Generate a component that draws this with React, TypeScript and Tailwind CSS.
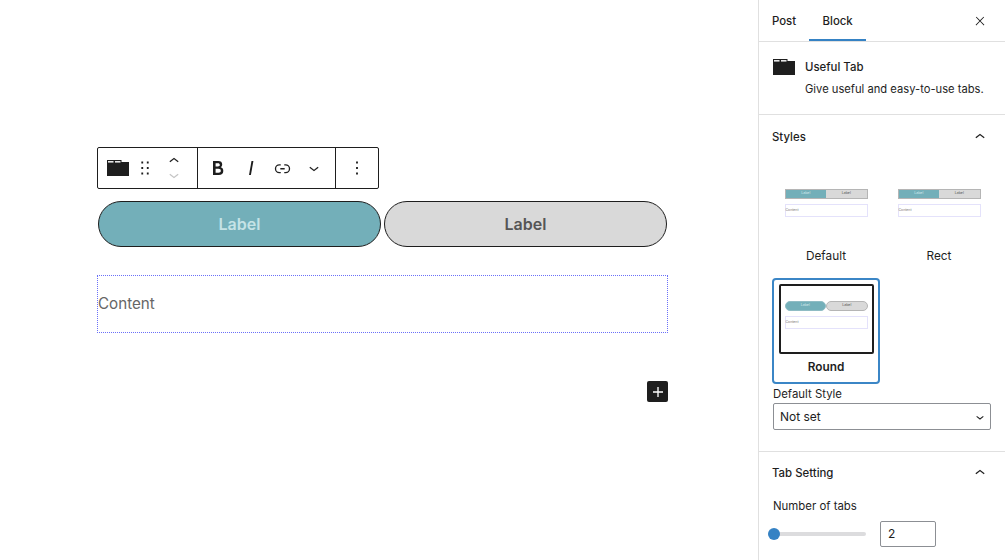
import type { ReactNode } from 'react'

const font = { bold: 'M14.7 11.3c1-.6 1.5-1.6 1.5-3 0-2.3-1.3-3.4-4-3.4H7v14h5.8c1.4 0 2.5-.3 3.3-1 .8-.7 1.2-1.7 1.2-2.9.1-1.9-.8-3.1-2.6-3.7zm-5.1-4h2.3c.6 0 1.1.1 1.4.4.3.3.5.7.5 1.2s-.2 1-.5 1.2c-.3.3-.8.4-1.4.4H9.6V7.3zm4.6 9c-.4.3-1 .4-1.7.4H9.6v-3.9h2.9c.7 0 1.3.2 1.7.5.4.3.6.8.6 1.5s-.2 1.2-.6 1.5z', italic: 'M12.5 5L10 19h1.9l2.5-14z' }
const link = 'M10 17.389H8.444A5.194 5.194 0 1 1 8.444 7H10v1.5H8.444a3.694 3.694 0 0 0 0 7.389H10v1.5ZM14 7h1.556a5.194 5.194 0 0 1 0 10.39H14v-1.5h1.556a3.694 3.694 0 0 0 0-7.39H14V7Zm-4.5 6h5v-1.5h-5V13Z'
const chevronDown = 'M17.5 11.6L12 16l-5.5-4.4.9-1.2L12 14l4.5-3.6 1 1.2z'
const chevronUp = 'M6.5 12.4L12 8l5.5 4.4-.9 1.2L12 10l-4.5 3.6-1-1.2z'
const more = 'M13 19h-2v-2h2v2zm0-6h-2v-2h2v2zm0-6h-2V5h2v2z'
const drag = 'M8 7h2V5H8v2zm0 6h2v-2H8v2zm0 6h2v-2H8v2zm6-14v2h2V5h-2zm0 8h2v-2h-2v2zm0 6h2v-2h-2v2z'
const close = 'M13 11.8l6.1-6.3-1-1-6.1 6.2-6.1-6.2-1 1 6.1 6.3-6.5 6.7 1 1 6.5-6.6 6.5 6.6 1-1z'
const plus = 'M18 11.2h-5.2V6h-1.6v5.2H6v1.6h5.2V18h1.6v-5.2H18z'

function Icon({ d, size = 24, className = '' }: { d: string; size?: number; className?: string }) {
  return <svg width={size} height={size} viewBox="0 0 24 24" fill="currentColor" className={className}><path d={d} /></svg>
}

function TabIcon() {
  return (
    <svg width="22" height="16" viewBox="0 0 22 16" className="shrink-0">
      <path d="M0 0h14.5v2H22v14H0z" fill="#1e1e1e" />
      <rect x="1" y="1" width="5.5" height="1.6" fill="#e8e8e8" />
      <rect x="8" y="1" width="5.5" height="1.6" fill="#e8e8e8" />
    </svg>
  )
}

function Preview({ round }: { round?: boolean }) {
  return (
    <div className="w-[83px]">
      <div className={`flex h-[10px] ${round ? '' : 'border border-[#b5b5b5]'}`}>
        <div className={`flex-1 flex items-center justify-center bg-[#73afb9] text-[3.5px] text-[#d5eaed] ${round ? 'rounded-full border border-[#8fbcc4]' : ''}`}>Label</div>
        <div className={`flex-1 flex items-center justify-center bg-[#d9d9d9] text-[3.5px] text-[#555] ${round ? 'rounded-full border border-[#b5b5b5]' : ''}`}>Label</div>
      </div>
      <div className="mt-[5px] h-[13px] border border-[#e4e2fb] flex items-center text-[3.5px] text-[#777]">Content</div>
    </div>
  )
}

function StyleCard({ label, round }: { label: string; round?: boolean }) {
  return (
    <div className={`h-[106px] w-[108px] flex flex-col items-center ${round ? 'rounded-[4px] border-2 border-[#3b86c6] p-[4px]' : 'p-[6px]'}`}>
      <div className={`h-[70px] w-[95px] shrink-0 flex justify-center ${round ? 'border-2 border-[#1e1e1e] rounded-[2px] pt-[15px]' : 'pt-[17px]'}`}>
        <Preview round={round} />
      </div>
      <div className={`leading-[18px] text-[11.8px] text-[#1e1e1e] ${round ? 'mt-[4px] font-semibold' : 'mt-[5px]'}`}>{label}</div>
    </div>
  )
}

function SectionTitle({ children }: { children: ReactNode }) {
  return (
    <div className="flex h-[22px] items-center justify-between">
      <span className="text-[11.4px] leading-[18px] font-medium text-[#1e1e1e]">{children}</span>
      <Icon d={chevronUp} size={20} className="text-[#1e1e1e] mr-[1px]" />
    </div>
  )
}

function ToolButton({ d, size = 24, className = '' }: { d: string; size?: number; className?: string }) {
  return <span className={`flex h-[24px] w-[24px] items-center justify-center ${className}`}><Icon d={d} size={size} className="text-[#1e1e1e]" /></span>
}

export default function App() {
  return (
    <div className="flex h-screen w-full overflow-hidden bg-white font-['Inter',sans-serif] text-[#1e1e1e]">
      <main className="flex-1 pt-[147px] pl-[97px]">
        <div className="w-[571px] flex flex-col">
          <div className="flex h-[42px] w-[282px] border border-[#1e1e1e] rounded-[2px]">
            <div className="flex items-center w-[100px] border-r border-[#1e1e1e] pl-[9px]">
              <TabIcon />
              <Icon d={drag} size={22} className="ml-[5px] text-[#1e1e1e]" />
              <div className="ml-[8px] flex flex-col items-center">
                <Icon d={chevronUp} size={20} className="-mb-[3px] text-[#1e1e1e]" />
                <Icon d={chevronDown} size={20} className="-mt-[3px] text-[#c4c4c4]" />
              </div>
            </div>
            <div className="flex items-center w-[138px] border-r border-[#1e1e1e] pl-[8px]">
              <ToolButton d={font.bold} />
              <ToolButton d={font.italic} className="ml-[9px]" />
              <ToolButton d={link} size={21} className="ml-[7px]" />
              <ToolButton d={chevronDown} size={20} className="ml-[8px]" />
            </div>
            <div className="flex flex-1 items-center justify-center"><Icon d={more} size={22} /></div>
          </div>
          <div className="mt-[12px] ml-[1px] flex gap-[3px] w-[569px]">
            <div className="flex h-[46px] w-[283px] items-center justify-center rounded-full border border-[#1e1e1e] bg-[#73afb9] text-[16px] font-semibold text-[#c5e3e6]">Label</div>
            <div className="flex h-[46px] w-[283px] items-center justify-center rounded-full border border-[#1e1e1e] bg-[#d9d9d9] text-[16px] font-semibold text-[#555]">Label</div>
          </div>
          <div className="mt-[28px] flex h-[58px] items-center border border-dotted border-[#6a70f8] text-[15.2px] text-[#666]">Content</div>
          <button className="mt-[48px] self-end flex h-[21px] w-[21px] items-center justify-center rounded-[2px] bg-[#1e1e1e] text-white"><Icon d={plus} size={20} /></button>
        </div>
      </main>
      <aside className="w-[247px] shrink-0 border-l border-[#e0e0e0] text-[11.4px]">
        <div className="flex h-[42px] items-start border-b border-[#e0e0e0] pl-[13px] pr-[14px]">
          <span className="mt-[12px] font-medium leading-[18px]">Post</span>
          <div className="ml-[13px] h-[41px] w-[57px] border-b-[2.5px] border-[#3582c4] text-center pt-[12px] font-medium leading-[18px]">Block</div>
          <Icon d={close} size={14} className="ml-auto mt-[14px] mr-[4px]" />
        </div>
        <div className="flex h-[73px] border-b border-[#e0e0e0] pl-[14px] pt-[16px]">
          <div className="pt-[1px]"><TabIcon /></div>
          <div className="ml-[10px]">
            <div className="font-medium leading-[18px]">Useful Tab</div>
            <div className="mt-[4px] text-[11.2px] leading-[18px]">Give useful and easy-to-use tabs.</div>
          </div>
        </div>
        <div className="h-[337px] border-b border-[#e0e0e0] pl-[13px] pr-[14px] pt-[11px]">
          <SectionTitle>Styles</SectionTitle>
          <div className="mt-[18px] grid grid-cols-[108px_108px] gap-x-[5px] gap-y-[6px]">
            <StyleCard label="Default" />
            <StyleCard label="Rect" />
            <StyleCard label="Round" round />
          </div>
          <div className="pl-[1px]">
            <div className="mt-[1px] leading-[18px]">Default Style</div>
            <div className="flex h-[27px] w-[218px] items-center justify-between rounded-[2px] border border-[#8c8f94] pl-[6px] pr-[2px] text-[12px]">
              <span>Not set</span>
              <Icon d={chevronDown} size={16} />
            </div>
          </div>
        </div>
        <div className="pl-[13px] pr-[14px] pt-[10px]">
          <SectionTitle>Tab Setting</SectionTitle>
          <div className="mt-[13px] pl-[1px] leading-[18px]">Number of tabs</div>
          <div className="mt-[6px] flex items-center">
            <div className="relative h-[4px] w-[98px] -ml-[4px] rounded-full bg-[#dcdcde]">
              <div className="absolute left-0 top-[-4px] h-[12px] w-[12px] rounded-full bg-[#3582c4]"></div>
            </div>
            <div className="ml-[14px] flex h-[26px] w-[56px] items-center rounded-[2px] border border-[#8c8f94] pl-[7px] text-[12px]">2</div>
          </div>
        </div>
      </aside>
    </div>
  )
}
